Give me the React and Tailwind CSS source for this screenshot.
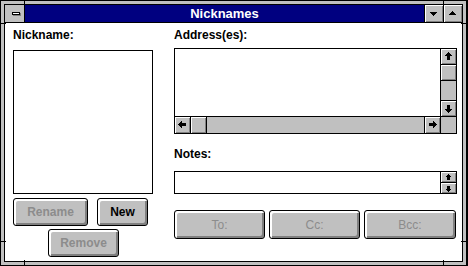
import clsx from 'clsx'

// Win 3.1 style arrow glyph (triangle + stem) drawn in a 15x15 box
function Arrow({ rotate = 0, size = 15 }) {
  return (
    <svg width={size} height={size} viewBox="0 0 15 15" shapeRendering="crispEdges">
      <g transform={`rotate(${rotate} 7.5 7.5)`} fill="#000">
        <rect x="7" y="3" width="1" height="1" />
        <rect x="6" y="4" width="3" height="1" />
        <rect x="5" y="5" width="5" height="1" />
        <rect x="4" y="6" width="7" height="1" />
        <rect x="6" y="7" width="3" height="4" />
      </g>
    </svg>
  )
}

function Tri({ down }) {
  return (
    <svg width="18" height="17" viewBox="0 0 18 17" shapeRendering="crispEdges" fill="#000">
      {down ? (
        <>
          <rect x="5" y="7" width="7" height="1" />
          <rect x="6" y="8" width="5" height="1" />
          <rect x="7" y="9" width="3" height="1" />
          <rect x="8" y="10" width="1" height="1" />
        </>
      ) : (
        <>
          <rect x="8" y="6" width="1" height="1" />
          <rect x="7" y="7" width="3" height="1" />
          <rect x="6" y="8" width="5" height="1" />
          <rect x="5" y="9" width="7" height="1" />
        </>
      )}
    </svg>
  )
}

const bevel = 'bg-[#c0c0c0] shadow-[inset_1px_1px_0_#fff,inset_-1px_-1px_0_#808080]'

function Btn({ className, children, disabled }) {
  return (
    <div
      className={clsx(
        'flex items-center justify-center border border-black rounded-[3px] bg-[#c0c0c0] shadow-[inset_2px_2px_0_#fff,inset_-2px_-2px_0_#808080] text-[12px] font-bold',
        disabled ? 'text-[#8c8c8c]' : 'text-black',
        className
      )}
    >
      {children}
    </div>
  )
}

function Label({ children }) {
  return <div className="h-[14px] leading-[14px] text-[12px] font-bold text-black">{children}</div>
}

export default function App() {
  return (
    <div className="w-[468px] h-[266px] bg-black font-['Liberation_Sans',Arial,sans-serif]">
      <div className="relative w-[467px] h-[266px] border border-black bg-[#c0c0c0] p-[3px]">
        <div className="h-full border border-black bg-white flex flex-col">
          {/* Title bar */}
          <div className="h-[18px] flex border-b border-black">
            <div className="w-[19px] h-[17px] bg-[#c0c0c0]">
              <svg width="19" height="17" viewBox="0 0 19 17" shapeRendering="crispEdges">
                <rect x="7" y="7" width="8" height="3" fill="#000" />
                <rect x="8" y="8" width="6" height="1" fill="#fff" />
                <rect x="15" y="8" width="1" height="3" fill="#808080" />
                <rect x="8" y="10" width="8" height="1" fill="#808080" />
              </svg>
            </div>
            <div className="w-px bg-black" />
            <div className="flex-1 bg-[#000080] flex items-center justify-center text-white text-[13px] font-bold leading-[17px]">
              Nicknames
            </div>
            <div className="w-px bg-black" />
            <div className={clsx('w-[18px]', bevel)}>
              <Tri down />
            </div>
            <div className="w-px bg-black" />
            <div className={clsx('w-[18px]', bevel)}>
              <Tri />
            </div>
          </div>

          {/* Body */}
          <div className="flex-1 flex pt-[5px] pl-[8px] pr-[5px]">
            <div className="w-[140px] flex flex-col">
              <Label>Nickname:</Label>
              <div className="mt-[8px] h-[144px] border border-black bg-white" />
              <div className="mt-[4px] flex">
                <Btn className="w-[75px] h-[28px]" disabled>Rename</Btn>
                <Btn className="ml-[9px] w-[51px] h-[28px]">New</Btn>
              </div>
              <Btn className="mt-[3px] ml-[35px] w-[71px] h-[28px]" disabled>Remove</Btn>
            </div>

            <div className="ml-[21px] w-[283px] flex flex-col">
              <Label>Address(es):</Label>
              <div className="mt-[6px] h-[86px] border border-black bg-white flex flex-col">
                <div className="flex-1 flex">
                  <div className="flex-1" />
                  <div className="w-[16px] border-l border-black flex flex-col bg-[#c0c0c0]">
                    <div className={clsx('h-[15px]', bevel)}><Arrow /></div>
                    <div className={clsx('h-[16px] border-t border-black', bevel)} />
                    <div className="flex-1 border-t border-black" />
                    <div className={clsx('h-[16px] border-t border-black', bevel)}><Arrow rotate={180} /></div>
                  </div>
                </div>
                <div className="h-[17px] border-t border-black flex bg-[#c0c0c0]">
                  <div className={clsx('w-[15px]', bevel)}><Arrow rotate={-90} /></div>
                  <div className={clsx('w-[16px] border-l border-black', bevel)} />
                  <div className="flex-1 border-l border-black" />
                  <div className={clsx('w-[16px] border-l border-black', bevel)}><Arrow rotate={90} /></div>
                  <div className="w-[16px] border-l border-black bg-[#c0c0c0]" />
                </div>
              </div>

              <div className="mt-[13px]">
                <Label>Notes:</Label>
              </div>
              <div className="mt-[10px] h-[23px] border border-black bg-white flex">
                <div className="flex-1" />
                <div className="w-[16px] border-l border-black flex flex-col">
                  <div className={clsx('flex-1 flex items-center justify-center overflow-hidden', bevel)}>
                    <Arrow size={11} />
                  </div>
                  <div className={clsx('flex-1 border-t border-black flex items-center justify-center overflow-hidden', bevel)}>
                    <Arrow size={11} rotate={180} />
                  </div>
                </div>
              </div>

              <div className="mt-[16px] flex gap-[4px]">
                <Btn className="w-[91px] h-[29px] font-normal" disabled>To:</Btn>
                <Btn className="w-[91px] h-[29px] font-normal" disabled>Cc:</Btn>
                <Btn className="w-[92px] h-[29px] font-normal" disabled>Bcc:</Btn>
              </div>
            </div>
          </div>
        </div>

        {/* resize corner ticks */}
        <div className="absolute left-[23px] top-0 w-px h-[5px] bg-black" />
        <div className="absolute left-[442px] top-0 w-px h-[5px] bg-black" />
        <div className="absolute left-[23px] bottom-0 w-px h-[5px] bg-black" />
        <div className="absolute left-[442px] bottom-0 w-px h-[5px] bg-black" />
        <div className="absolute left-0 top-[22px] w-[5px] h-px bg-black" />
        <div className="absolute right-0 top-[22px] w-[5px] h-px bg-black" />
        <div className="absolute left-0 bottom-[23px] w-[5px] h-px bg-black" />
        <div className="absolute right-0 bottom-[23px] w-[5px] h-px bg-black" />
      </div>
    </div>
  )
}
